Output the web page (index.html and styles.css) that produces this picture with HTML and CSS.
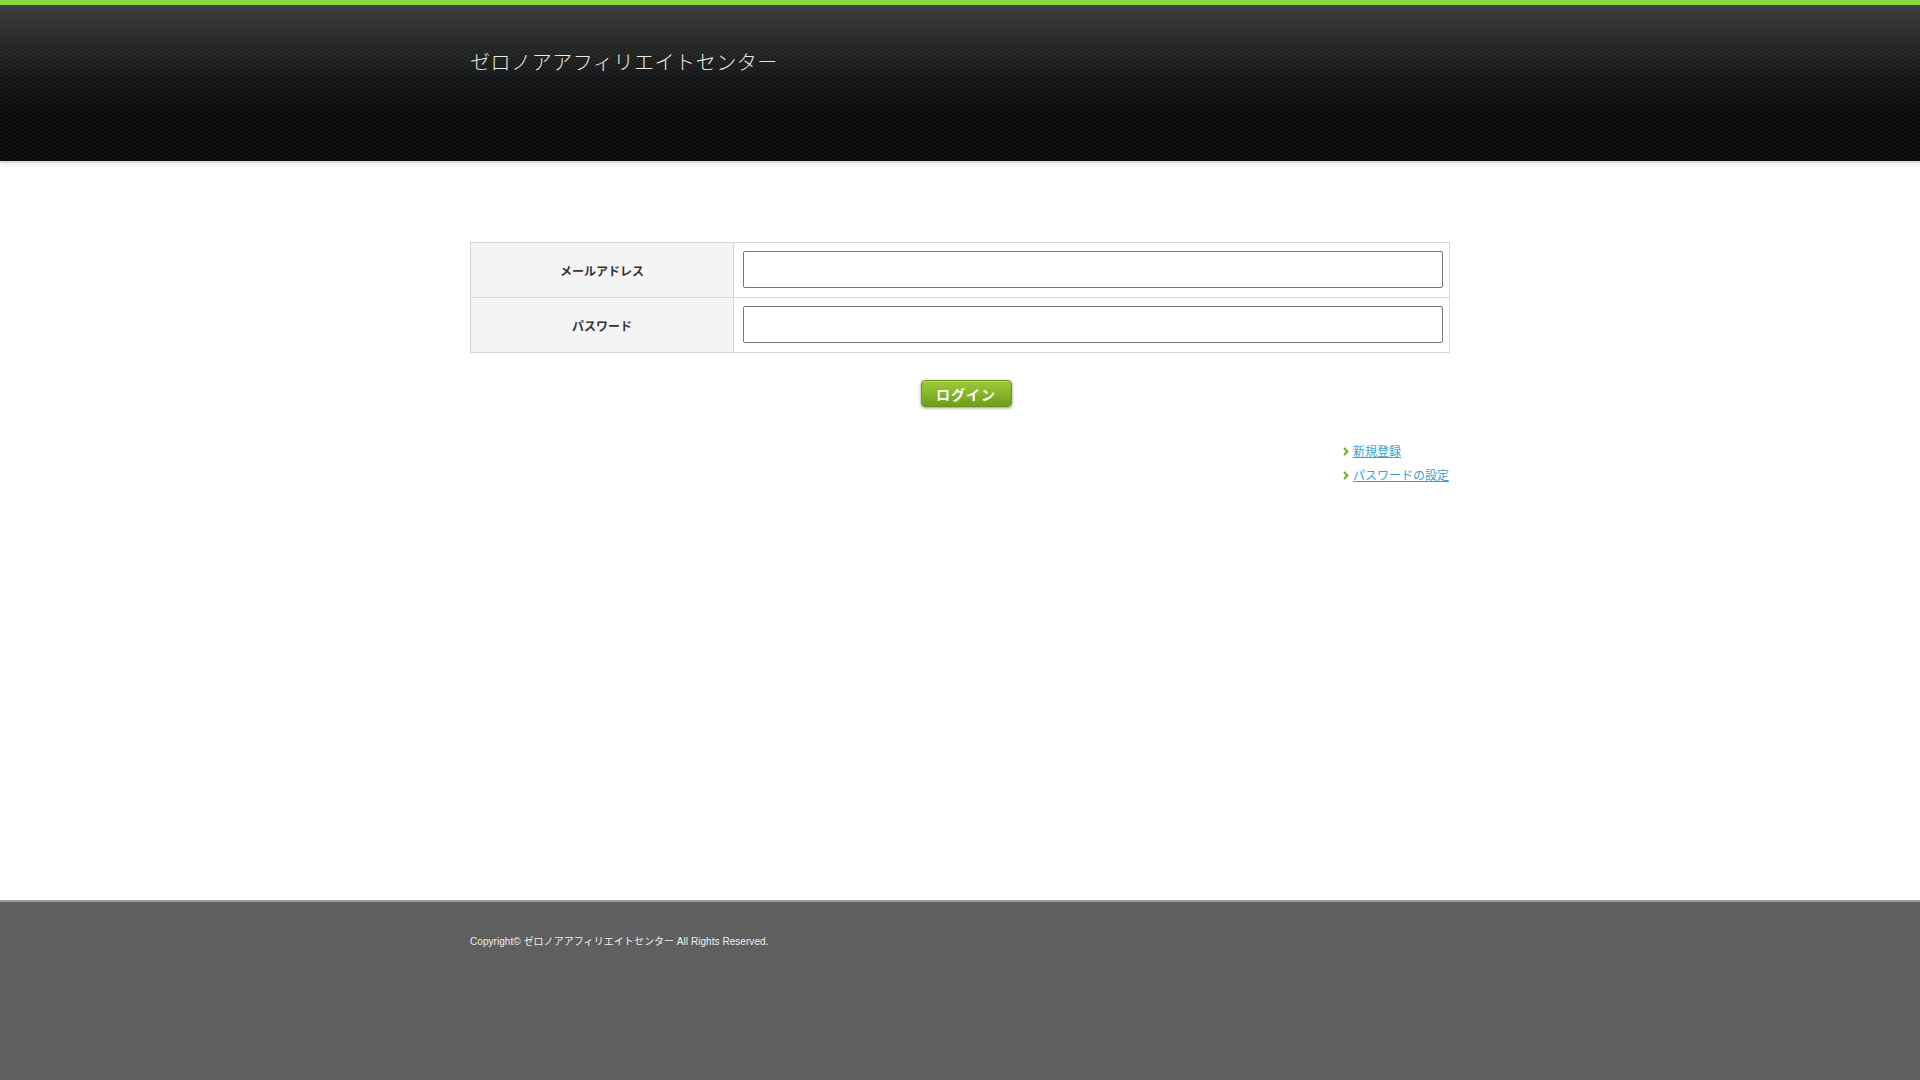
FILE: index.html
```html
<!DOCTYPE html>
<html lang="ja">
<head>
<meta charset="utf-8">
<title>ゼロノアアフィリエイトセンター</title>
<link rel="stylesheet" href="styles.css">
</head>
<body>
<div class="page">
  <header class="header">
    <div class="wrap">
      <h1 class="site-title">ゼロノアアフィリエイトセンター</h1>
    </div>
  </header>
  <main class="main">
    <div class="wrap">
      <form class="login-form">
        <table class="form-table">
          <tr>
            <th>メールアドレス</th>
            <td><input type="text" class="field"></td>
          </tr>
          <tr>
            <th>パスワード</th>
            <td><input type="password" class="field"></td>
          </tr>
        </table>
        <div class="actions">
          <button type="button" class="btn">ログイン</button>
        </div>
        <ul class="links">
          <li><svg class="chev" width="6" height="9" viewBox="0 0 6 9"><polyline points="1,1 4.5,4.5 1,8" fill="none" stroke="#5fb40c" stroke-width="1.8"/></svg><a href="#">新規登録</a></li>
          <li><svg class="chev" width="6" height="9" viewBox="0 0 6 9"><polyline points="1,1 4.5,4.5 1,8" fill="none" stroke="#5fb40c" stroke-width="1.8"/></svg><a href="#">パスワードの設定</a></li>
        </ul>
      </form>
    </div>
  </main>
  <footer class="footer">
    <div class="wrap">
      <p class="copy">Copyright© ゼロノアアフィリエイトセンター All Rights Reserved.</p>
    </div>
  </footer>
</div>
</body>
</html>
```

FILE: styles.css
```css
* { box-sizing: border-box; }
html, body { margin: 0; padding: 0; }
body {
  font-family: "Noto Sans CJK JP", "Liberation Sans", sans-serif;
  color: #333;
  background: #fff;
}
.page {
  min-height: 100vh;
  display: flex;
  flex-direction: column;
}
.wrap {
  width: 980px;
  margin: 0 auto;
}
.header {
  border-top: 5px solid #8bd641;
  height: 163px;
  background-color: #07080a;
  background-image:
    repeating-conic-gradient(rgba(255,255,255,0.045) 0% 25%, rgba(0,0,0,0) 0% 50%),
    linear-gradient(to bottom, #3a3a3a 0%, #242424 25%, #111214 50%, #07080a 72%, #07080a 100%);
  background-size: 4px 4px, 100% 100%;
  border-bottom: 2px solid #dcdcdc;
  box-shadow: 0 2px 5px rgba(0,0,0,0.08);
}
.site-title {
  margin: 0;
  padding-top: 45px;
  font-size: 20px;
  line-height: 24px;
  font-weight: 300;
  color: #e8e8e8;
  letter-spacing: 0.55px;
}
.main {
  flex: 1;
  padding-top: 79px;
}
.form-table {
  width: 980px;
  border-collapse: collapse;
}
.form-table th,
.form-table td {
  border: 1px solid #d6d6d6;
  height: 55px;
}
.form-table th {
  width: 263px;
  background: #f4f4f4;
  font-size: 12px;
  font-weight: 700;
  color: #333;
  text-align: center;
  padding-bottom: 1px;
}
.form-table td {
  padding: 8px 6px 9px 9px;
  vertical-align: top;
}
.field {
  display: block;
  width: 100%;
  height: 37px;
  border: 1px solid #777;
  border-radius: 2px;
  background: #fff;
  font-size: 14px;
  padding: 0 6px;
}
.actions {
  display: flex;
  justify-content: center;
  padding-left: 12px;
  margin-top: 27px;
}
.btn {
  width: 91px;
  height: 27px;
  border: 1px solid #6a9a14;
  border-radius: 4px;
  background: linear-gradient(to bottom, #9cc93a 0%, #86b629 50%, #6f9d18 100%);
  box-shadow: 0 1px 3px rgba(0,0,0,0.45), inset 0 1px 0 rgba(255,255,255,0.25);
  color: #fff;
  font-family: "Noto Sans CJK JP", sans-serif;
  font-size: 14px;
  font-weight: 700;
  letter-spacing: 1px;
  padding: 0;
  cursor: pointer;
}
.links {
  list-style: none;
  margin: 32px 0 0;
  padding: 0;
  display: flex;
  flex-direction: column;
  align-items: flex-end;
}
.links li {
  display: flex;
  align-items: center;
  gap: 4px;
  font-size: 12px;
  line-height: 24px;
  width: 107px;
}
.links a {
  color: #3a9fd0;
  text-decoration: underline;
}
.chev { flex: none; }
.footer {
  height: 180px;
  background: #5f5f5f;
  border-top: 2px solid #9a9a9a;
}
.copy {
  margin: 0;
  padding-top: 34px;
  font-family: "Liberation Sans", "Noto Sans CJK JP", sans-serif;
  font-size: 10px;
  line-height: 12px;
  color: #f0f0f0;
  letter-spacing: 0.05px;
}
```
